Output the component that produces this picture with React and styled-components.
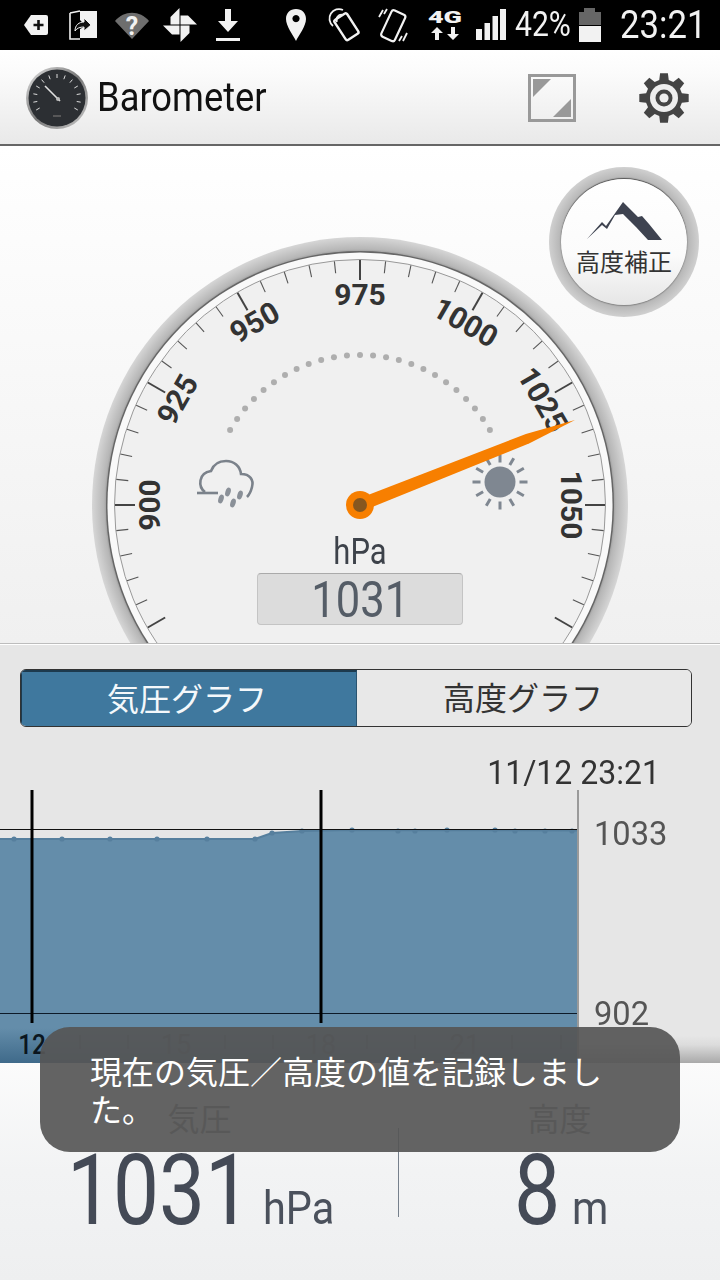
import React from 'react';
import styled, { createGlobalStyle } from 'styled-components';

const SANS = `Roboto, "Noto Sans CJK JP", "Liberation Sans", sans-serif`;
const JP = `"Noto Sans CJK JP", Roboto, sans-serif`;

const Global = createGlobalStyle`
  html, body { margin: 0; padding: 0; background: #fff; }
  * { box-sizing: border-box; }
`;

const Screen = styled.div`
  position: relative; width: 720px; height: 1280px; overflow: hidden;
  display: flex; flex-direction: column; font-family: ${SANS};
`;

/* status bar */
const StatusBar = styled.div`
  height: 50px; flex: none; background: #000; display: flex; align-items: center;
  padding-left: 24px; color: #f2f2f2;
`;
const StatusGlyph = styled.svg`
  display: block; flex: none; height: 50px; margin-left: ${p => p.$ml || 0}px;
`;
const StatusText = styled.span`
  flex: none; display: block; width: ${p => p.$w}px; margin-left: ${p => p.$ml}px;
  font-size: ${p => p.$size}px; line-height: 50px; white-space: nowrap; font-weight: 400;
  transform: scaleX(${p => p.$sx}); transform-origin: left center;
`;

/* app bar */
const AppBar = styled.header`
  height: 96px; flex: none; display: flex; align-items: center;
  padding: 2px 31px 0 25px; border-bottom: 2px solid #666;
  background: linear-gradient(#fff, #fbfbfb 25%, #e9e9e9);
`;
const AppIcon = styled.svg`display: block; flex: none; width: 64px; height: 64px;`;
const AppTitle = styled.h1`
  margin: 0 0 0 8px; flex: 1; font-size: 40px; font-weight: 400; color: #111; line-height: 1;
  transform: scaleX(.908); transform-origin: left center;
`;
const ActionIcon = styled.svg`display: block; flex: none; margin-left: ${p => p.$ml}px;`;

/* gauge */
const GaugeSection = styled.section`
  position: relative; height: 498px; flex: none; overflow: hidden;
  display: flex; justify-content: center; padding-top: 79px;
  background: linear-gradient(#fff, #fbfbfb 25%, #f0f0f0);
  border-bottom: 1px solid #bdbdbd;
`;
const GaugeDial = styled.svg`display: block; flex: none; width: 560px; height: 560px;`;
const GaugeNumber = styled.text`
  font-family: ${SANS}; font-size: 30px; font-weight: 700; fill: #333;
  text-anchor: middle; dominant-baseline: central;
`;
const Readout = styled.div`
  position: absolute; left: 257px; top: 427px; width: 206px; display: flex; flex-direction: column; align-items: center;
`;
const ReadoutUnit = styled.div`
  position: absolute; top: -41px; font-size: 36px; line-height: 40px; color: #3d424a;
  transform: scaleX(.86);
`;
const ReadoutValue = styled.div`
  width: 206px; height: 52px; border-radius: 4px; background: #dcdcdc; border: 1px solid #c4c4c4;
  border-top-color: #aaa; text-align: center; font-size: 50px; line-height: 52px; font-weight: 400; color: #555d67;
`;
const ReadoutDigits = styled.span`display: inline-block; transform: scaleX(.87);`;
const CalibrateButton = styled.button`
  position: absolute; left: 549px; top: 21px; width: 150px; height: 150px; border-radius: 50%; padding: 0;
  border: 0; background: radial-gradient(circle, #aaa 0 63px, #b9b9b9 65px, #d0d0d0 75px);
  display: flex; align-items: center; justify-content: center;
`;
const CalibrateFace = styled.span`
  width: 126px; height: 126px; border-radius: 50%; display: flex; flex-direction: column; align-items: center;
  padding-top: 23px; background: linear-gradient(#fff, #fbfbfb 60%, #e6e6e6);
  box-shadow: 0 -1px 1px #555, 0 1px 1px #888;
`;
const MountainMark = styled.svg`display: block; flex: none; width: 76px; height: 38px;`;
const CalibrateLabel = styled.span`
  font-family: ${JP}; font-size: 24px; line-height: 30px; color: #333; white-space: nowrap; margin-top: 6px;
`;

/* tabs */
const TabsRow = styled.div`
  flex: none; height: 115px; padding: 24px 28px 0 20px; background: #e6e6e6; border-top: 1px solid #fff;
`;
const Segmented = styled.div`
  height: 58px; display: grid; grid-template-columns: 336px 1fr; border-radius: 6px; overflow: hidden;
  border: 1px solid #333;
`;
const Segment = styled.div`
  font-family: ${JP}; font-size: 32px; text-align: center;
  line-height: ${p => (p.$active ? 50 : 52)}px;
  background: ${p => (p.$active ? '#3f789e' : '#e8e8e8')};
  color: ${p => (p.$active ? '#f4f8fb' : '#333')};
  border-top: ${p => (p.$active ? '2px solid #1d3a4e' : '0')};
  border-left: ${p => (p.$active ? '1px solid #1d3a4e' : '0')};
  border-right: ${p => (p.$active ? '1px solid #2a5470' : '0')};
  padding-right: ${p => (p.$active ? 4 : 2)}px;
`;

/* chart */
const ChartPanel = styled.section`
  flex: none; height: 304px; display: flex; flex-direction: column;
  background: linear-gradient(#e6e6e6 0 91%, #dcdcdc 94%, #a9a9a9 100%);
`;
const ChartDate = styled.div`
  height: 31px; flex: none; margin-top: -4px; padding-right: 60px; text-align: right; font-size: 33px; line-height: 36px; color: #333;
  transform: scaleX(.97); transform-origin: 660px center;
`;
const ChartBody = styled.div`
  flex: 1; display: flex; min-height: 0; margin-top: 4px;
`;
const ChartPlot = styled.svg`display: block; flex: none; width: 580px; height: 273px;`;
const ChartTick = styled.text`
  font-family: ${SANS}; font-size: 27px; font-weight: ${p => (p.$strong ? 500 : 400)};
  fill: ${p => (p.$strong ? '#0b1620' : '#3f5a70')}; text-anchor: middle;
`;
const ChartAxis = styled.div`
  flex: 1; display: flex; flex-direction: column; gap: 144px; padding: 25px 0 0 14px;
`;
const AxisValue = styled.div`
  font-size: 34px; line-height: 36px; color: #555; transform: scaleX(.96); transform-origin: left center;
`;

/* readings */
const Readings = styled.section`
  flex: 1; display: grid; grid-template-columns: 399px 1fr; padding-top: 34px;
  background: linear-gradient(#fbfbfb, #f2f3f4 50%, #eeeff0);
`;
const Reading = styled.div`
  display: flex; flex-direction: column; align-items: center;
`;
const ReadingDivided = styled(Reading)`
  position: relative;
  &::before { content: ''; position: absolute; left: -1px; top: 31px; width: 1px; height: 89px; background: #76808c; }
`;
const ReadingLabel = styled.div`
  font-family: ${JP}; font-size: 32px; line-height: 40px; color: #777;
`;
const ReadingValue = styled.div`
  display: flex; align-items: baseline; margin-top: 5px; line-height: 1; white-space: nowrap; color: #444a56;
`;
const ReadingNumber = styled.span`
  display: inline-block; font-size: 98px; font-weight: 400; line-height: 98px;
  width: ${p => p.$w}px; transform: scaleX(${p => p.$sx}); transform-origin: left center;
`;
const ReadingUnit = styled.span`
  display: inline-block; font-size: 46px; font-weight: 400; color: #4b515c;
  width: ${p => p.$w}px; transform: scaleX(.9); transform-origin: left center; margin-left: ${p => p.$ml}px;
`;

/* toast */
const Toast = styled.div`
  position: absolute; left: 40px; top: 1027px; width: 640px; height: 125px; border-radius: 30px;
  padding: 24px 50px 0; background: rgba(86, 86, 86, .92); color: #fff;
  font-family: ${JP}; font-size: 32px; line-height: 38px;
`;

const CX = 280, CY = 280;
const polar = (deg, r) => {
  const a = (deg - 90) * Math.PI / 180;
  return [CX + r * Math.cos(a), CY + r * Math.sin(a)];
};
const ticks = [];
for (let d = -120; d <= 120; d += 6) ticks.push(d);
const dots = [];
for (let d = -60; d <= 60; d += 5) dots.push(d);
const labels = [[-90, '900'], [-60, '925'], [-30, '950'], [0, '975'], [30, '1000'], [60, '1025'], [90, '1050']];

const gearPath = (cx, cy, ro, ri, n) => {
  let s = '';
  const step = 360 / n;
  for (let i = 0; i < n; i++) {
    const a = i * step - 90;
    const pts = [[a - step * 0.33, ri], [a - step * 0.2, ro], [a + step * 0.2, ro], [a + step * 0.33, ri]];
    pts.forEach(([d, r], j) => {
      const t = d * Math.PI / 180;
      s += `${i === 0 && j === 0 ? 'M' : 'L'}${(cx + r * Math.cos(t)).toFixed(2)} ${(cy + r * Math.sin(t)).toFixed(2)} `;
    });
  }
  return s + 'Z';
};

const Dial = () => {
  const tip = [495, 195];
  const dx = tip[0] - CX, dy = tip[1] - CY;
  const len = Math.hypot(dx, dy);
  const nx = -dy / len, ny = dx / len;
  const at = (t, w) => `${CX + dx * t + nx * w},${CY + dy * t + ny * w}`;
  const needle = [at(0, 6.5), at(0.78, 5), at(1, 0), at(0.78, -5), at(0, -6.5)].join(' ');
  return (
    <GaugeDial viewBox="0 0 560 560">
      <defs>
        <radialGradient id="ring" gradientUnits="userSpaceOnUse" cx={CX} cy={CY} r="268">
          <stop offset="0.94" stopColor="#8e8e8e" />
          <stop offset="0.955" stopColor="#b6b6b6" />
          <stop offset="1" stopColor="#d6d6d6" />
        </radialGradient>
        <filter id="soft" x="-20%" y="-20%" width="140%" height="140%"><feGaussianBlur stdDeviation="0.7" /></filter>
      </defs>
      <circle cx={CX} cy={CY} r="268" fill="url(#ring)" />
      <circle cx={CX} cy={CY} r="254" fill="#666" />
      <circle cx={CX} cy={CY} r="252.5" fill="#f9f9f9" />
      <circle cx={CX} cy={CY} r="245.5" fill="#f0f0f0" stroke="#999" strokeWidth="1" />
      {ticks.map(d => {
        const major = d % 30 === 0;
        const [x1, y1] = polar(d, 245);
        const [x2, y2] = polar(d, major ? 225 : 233);
        return <line key={d} x1={x1} y1={y1} x2={x2} y2={y2} stroke={major ? '#444' : '#555'} strokeWidth={major ? 2 : 1.1} />;
      })}
      {dots.map(d => {
        const [x, y] = polar(d, 150);
        return <circle key={d} cx={x} cy={y} r="3" fill="#aeaeae" />;
      })}
      {labels.map(([d, t]) => {
        const [x, y] = polar(d, 211);
        return <GaugeNumber key={t} x={x} y={y} transform={`rotate(${d} ${x} ${y})`}>{t}</GaugeNumber>;
      })}
      {/* cloud */}
      <g fill="none" stroke="#7b828b" strokeWidth="2.6">
        <path d="M125 267 C118 262 118 248 131 246 C134 238 140 236 146 236 C154 236 160 241 161 249 C170 249 174 255 172 262 C171 266 169 270 167 272" />
        <path d="M117 268 H138" />
      </g>
      <g fill="#8a9098">
        <ellipse cx="148" cy="267" rx="2.6" ry="4.5" transform="rotate(18 148 267)" />
        <ellipse cx="160" cy="270" rx="2.6" ry="4.5" transform="rotate(18 160 270)" />
        <ellipse cx="141" cy="274" rx="2.6" ry="4.5" transform="rotate(18 141 274)" />
        <ellipse cx="153" cy="278" rx="2.6" ry="4.5" transform="rotate(18 153 278)" />
      </g>
      {/* sun */}
      <circle cx="420" cy="257" r="15.5" fill="#7f8791" />
      {Array.from({ length: 12 }, (_, i) => {
        const t = i * 30 * Math.PI / 180;
        return <line key={i} x1={420 + 19.5 * Math.cos(t)} y1={257 + 19.5 * Math.sin(t)} x2={420 + 27.5 * Math.cos(t)} y2={257 + 27.5 * Math.sin(t)} stroke="#7f8791" strokeWidth="3" />;
      })}
      {/* needle */}
      <polygon points={needle} fill="#f77f00" filter="url(#soft)" />
      <circle cx={CX} cy={CY} r="14" fill="#f77f00" filter="url(#soft)" />
      <circle cx={CX} cy={CY} r="7" fill="#85571f" />
    </GaugeDial>
  );
};

const dataPts = [[14, 49], [62, 49], [110, 49], [157, 49], [207, 49], [255, 49], [272, 43], [302, 41], [352, 40], [398, 41], [415, 41], [447, 40], [495, 40], [515, 41], [545, 41], [572, 41]];
const tickXs = [80, 128, 225, 273, 367, 415, 512, 561];

const Plot = () => (
  <ChartPlot viewBox="0 0 580 273">
    <defs>
      <linearGradient id="area" x1="0" y1="0" x2="0" y2="1">
        <stop offset="0" stopColor="#648daa" />
        <stop offset="0.85" stopColor="#648daa" />
        <stop offset="1" stopColor="#3f6a8a" />
      </linearGradient>
    </defs>
    <path d="M0 49 L255 49 L272 43 L302 41 L352 40 L578 40.5 L578 273 L0 273 Z" fill="url(#area)" />
    <path d="M0 49 L255 49 L272 43 L302 41 L352 40 L578 40.5" fill="none" stroke="#567f9d" strokeWidth="2" />
    {dataPts.map(([x, y]) => <circle key={x} cx={x} cy={y} r="2.6" fill="#567f9d" />)}
    <line x1="0" y1="39.5" x2="578" y2="39.5" stroke="#111" strokeWidth="1" />
    <line x1="0" y1="223.5" x2="578" y2="223.5" stroke="#0d1a28" strokeWidth="1" />
    <line x1="32" y1="0" x2="32" y2="233" stroke="#000" strokeWidth="3" />
    <line x1="321" y1="0" x2="321" y2="233" stroke="#000" strokeWidth="3" />
    <line x1="578" y1="0" x2="578" y2="273" stroke="#9a9a9a" strokeWidth="2" />
    {tickXs.map(x => <line key={x} x1={x} y1="245" x2={x} y2="259" stroke="#3f5a70" strokeWidth="1.5" />)}
    <ChartTick $strong x="32" y="264" transform="translate(32 0) scale(.9 1) translate(-32 0)">12</ChartTick>
    <ChartTick x="176" y="264">15</ChartTick>
    <ChartTick x="321" y="264">18</ChartTick>
    <ChartTick x="465" y="264">21</ChartTick>
  </ChartPlot>
);

const StatusIcons = () => (
  <>
    <StatusGlyph width="24" viewBox="0 0 24 50">
      <path d="M7 15 H22 Q24 15 24 17 V33 Q24 35 22 35 H7 L0 25 Z" fill="#f2f2f2" />
      <path d="M14.5 20 v10 M9.5 25 h10" stroke="#111" strokeWidth="2.6" />
    </StatusGlyph>
    <StatusGlyph $ml={21} width="28" viewBox="0 0 28 50">
      <path d="M1 13 L11 11 M1 13 V39 L11 39" fill="none" stroke="#f2f2f2" strokeWidth="1.6" />
      <path d="M11 11 H28 V38 H11 V29 L17 26 L11 20 Z" fill="#f2f2f2" />
      <path d="M6 31 C6 25 10 22 15 22 V18 L22 25 L15 31 V27 C11 27 8 28 6 31 Z" fill="#111" stroke="#f2f2f2" strokeWidth="1" />
    </StatusGlyph>
    <StatusGlyph $ml={18} width="34" viewBox="0 0 34 50">
      <path d="M0 21 C9 10 25 10 34 21 L17 39 Z" fill="#6e6e6e" />
      <text x="17" y="35" textAnchor="middle" fontFamily={SANS} fontWeight="700" fontSize="25" fill="#f2f2f2">?</text>
    </StatusGlyph>
    <StatusGlyph $ml={13} width="36" viewBox="0 0 36 50">
      {[0, 90, 180, 270].map(r => (
        <path key={r} d="M17.5 24.5 L17.5 8 L8.5 17 L8.5 24.5 Z" fill="#f2f2f2" transform={`rotate(${r} 18 25)`} />
      ))}
    </StatusGlyph>
    <StatusGlyph $ml={18} width="24" viewBox="0 0 24 50">
      <path d="M9 9 H15 V21 H22 L12 32 L2 21 H9 Z" fill="#f2f2f2" />
      <rect y="38" width="24" height="3" fill="#f2f2f2" />
    </StatusGlyph>
    <StatusGlyph $ml={46} width="20" viewBox="0 0 20 50">
      <path fillRule="evenodd" d="M10 9 C16 9 20 13 20 19 C20 26 13 35 10 41 C7 35 0 26 0 19 C0 13 4 9 10 9 Z M10 15 a3.6 3.6 0 1 0 0.01 0 Z" fill="#f2f2f2" />
    </StatusGlyph>
    <StatusGlyph $ml={22} width="34" viewBox="0 0 34 50">
      <g fill="none" stroke="#f2f2f2">
        <rect x="11" y="15" width="15" height="24" rx="2" strokeWidth="2.4" transform="rotate(-33 18 27)" />
        <path d="M5 26 A 9.5 9.5 0 0 1 15 10" strokeWidth="1.8" />
        <path d="M9 22 A 5 5 0 0 1 15 15" strokeWidth="1.8" />
      </g>
    </StatusGlyph>
    <StatusGlyph $ml={16} width="30" viewBox="0 0 30 50">
      <g fill="none" stroke="#f2f2f2">
        <rect x="8" y="11" width="15" height="29" rx="2.5" strokeWidth="2.2" transform="rotate(25 15 25)" />
        <path d="M5 10 L1 17 M9 9 L6 14 M25 41 L29 33 M21 41 L24 36" strokeWidth="1.8" />
      </g>
    </StatusGlyph>
    <StatusGlyph $ml={20} width="35" viewBox="0 0 35 50">
      <text x="17" y="23" textAnchor="middle" fontFamily={SANS} fontWeight="900" fontSize="17" fill="#f2f2f2" textLength="34" lengthAdjust="spacingAndGlyphs">4G</text>
      <path d="M9 27 L15 33 H11 V40 H7 V33 H3 Z M25 40 L19 34 H23 V27 H27 V34 H31 Z" fill="#f2f2f2" />
    </StatusGlyph>
    <StatusGlyph $ml={13} width="30" viewBox="0 0 30 50">
      <g fill="#f2f2f2">
        <rect x="0" y="29" width="6" height="11" />
        <rect x="8.5" y="23" width="5.5" height="17" />
        <rect x="16.5" y="16" width="5.5" height="24" />
        <rect x="24" y="9" width="6" height="31" />
      </g>
    </StatusGlyph>
    <StatusText $w={55} $ml={9} $size={35} $sx={0.86}>42%</StatusText>
    <StatusGlyph $ml={9} width="22" viewBox="0 0 22 50">
      <path d="M5 8 H16 V12 H22 V25 H0 V12 H5 Z" fill="#666" />
      <rect y="26" width="22" height="16" fill="#f2f2f2" />
    </StatusGlyph>
    <StatusText $w={86} $ml={19} $size={39} $sx={0.89}>23:21</StatusText>
  </>
);

export default function App() {
  return (
    <Screen>
      <Global />
      <StatusBar><StatusIcons /></StatusBar>
      <AppBar>
        <AppIcon viewBox="0 0 64 64">
          <defs>
            <linearGradient id="bezel" x1="0" y1="0" x2="1" y2="1">
              <stop offset="0" stopColor="#e6e6e6" /><stop offset="0.5" stopColor="#777" /><stop offset="1" stopColor="#ccc" />
            </linearGradient>
          </defs>
          <circle cx="32" cy="32" r="31" fill="url(#bezel)" />
          <circle cx="32" cy="32" r="28.5" fill="#2c2f33" />
          {Array.from({ length: 13 }, (_, i) => {
            const a = (-120 + i * 20 - 90) * Math.PI / 180;
            return <line key={i} x1={32 + 24 * Math.cos(a)} y1={32 + 24 * Math.sin(a)} x2={32 + 20 * Math.cos(a)} y2={32 + 20 * Math.sin(a)} stroke="#ddd" strokeWidth="1" />;
          })}
          <line x1="20" y1="20" x2="35" y2="35" stroke="#e0e0e0" strokeWidth="1.6" />
          <circle cx="33" cy="33" r="2" fill="#bbb" />
          <line x1="28" y1="50" x2="36" y2="50" stroke="#666" strokeWidth="1.5" />
        </AppIcon>
        <AppTitle>Barometer</AppTitle>
        <ActionIcon width="48" height="48" viewBox="0 0 48 48">
          <rect x="1.5" y="1.5" width="45" height="45" fill="none" stroke="#999" strokeWidth="3" />
          <path d="M5 5 H23 L5 23 Z M43 43 H25 L43 25 Z" fill="#999" />
        </ActionIcon>
        <ActionIcon $ml={63} width="50" height="50" viewBox="0 0 50 50">
          <path d={gearPath(25, 25, 25, 18.5, 8)} fill="#444" />
          <circle cx="25" cy="25" r="14" fill="#eee" />
          <circle cx="25" cy="25" r="8.5" fill="#444" />
          <circle cx="25" cy="25" r="4.6" fill="#eee" />
        </ActionIcon>
      </AppBar>

      <GaugeSection>
        <Dial />
        <CalibrateButton type="button">
          <CalibrateFace>
            <MountainMark viewBox="0 0 76 38">
              <path d="M1 37 L16 20 L20 24 L37 0 L52 15 L56 14 L63 22 L76 38 L62 38 L50 25 L44 19 L37 12 L29 13 L21 27 L16 23 Z" fill="#3e4350" />
            </MountainMark>
            <CalibrateLabel>高度補正</CalibrateLabel>
          </CalibrateFace>
        </CalibrateButton>
        <Readout>
          <ReadoutUnit>hPa</ReadoutUnit>
          <ReadoutValue><ReadoutDigits>1031</ReadoutDigits></ReadoutValue>
        </Readout>
      </GaugeSection>

      <TabsRow>
        <Segmented>
          <Segment $active>気圧グラフ</Segment>
          <Segment>高度グラフ</Segment>
        </Segmented>
      </TabsRow>

      <ChartPanel>
        <ChartDate>11/12 23:21</ChartDate>
        <ChartBody>
          <Plot />
          <ChartAxis>
            <AxisValue>1033</AxisValue>
            <AxisValue>902</AxisValue>
          </ChartAxis>
        </ChartBody>
      </ChartPanel>

      <Readings>
        <Reading>
          <ReadingLabel>気圧</ReadingLabel>
          <ReadingValue>
            <ReadingNumber $w={178} $sx={0.835}>1031</ReadingNumber>
            <ReadingUnit $w={70} $ml={18}>hPa</ReadingUnit>
          </ReadingValue>
        </Reading>
        <ReadingDivided>
          <ReadingLabel>高度</ReadingLabel>
          <ReadingValue>
            <ReadingNumber $w={46} $sx={0.84}>8</ReadingNumber>
            <ReadingUnit $w={34} $ml={12}>m</ReadingUnit>
          </ReadingValue>
        </ReadingDivided>
      </Readings>

      <Toast>現在の気圧／高度の値を記録しました。</Toast>
    </Screen>
  );
}
